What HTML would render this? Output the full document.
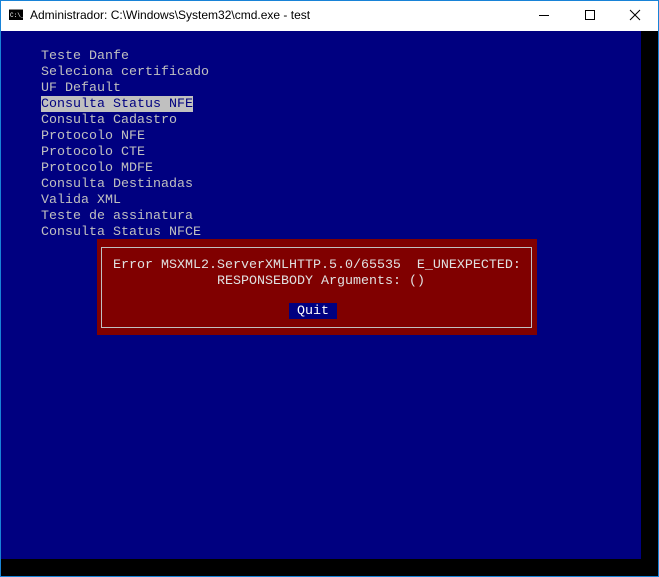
<!DOCTYPE html>
<html><head><style>
*{margin:0;padding:0}
body{width:659px;height:577px;background:#000;position:relative;overflow:hidden;font-family:"Liberation Mono",monospace}
#tb{position:absolute;left:0;top:0;width:659px;height:31px;background:#fff}
#tt{position:absolute;left:30px;top:8px;font:12px "Liberation Sans",sans-serif;color:#000}
#con{position:absolute;left:1px;top:31px;width:640px;height:528px;background:#000080}
.bl{position:absolute;background:#1883d7}
.ln{position:absolute;left:41px;font-size:13.33px;line-height:16px;height:16px;color:#c0c0c0;white-space:pre}
#dlg{position:absolute;left:97px;top:239px;width:440px;height:96px;background:#800000}
#in{position:absolute;left:4px;top:8px;width:429px;height:79px;border:1px solid #c0c0c0}
.dt{position:absolute;font-size:13.33px;line-height:16px;color:#e0e0e0;white-space:pre}
</style></head><body>
<div id="tb">
<svg style="position:absolute;left:9px;top:9px" width="14" height="11"><rect x="0" y="0" width="14" height="11" fill="#000"/><rect x="0" y="0" width="14" height="1" fill="#888"/><text x="1" y="8" font-size="6" fill="#fff" font-family="Liberation Mono">C:\_</text></svg>
<div id="tt">Administrador: C:\Windows\System32\cmd.exe - test</div>
<svg style="position:absolute;left:530px;top:8px" width="120" height="16"><line x1="9" y1="7.5" x2="19" y2="7.5" stroke="#000"/><rect x="55.5" y="2.5" width="9" height="9" fill="none" stroke="#000"/><path d="M100 2 L110 12 M110 2 L100 12" stroke="#000"/></svg>
</div>
<div class="bl" style="left:658px;top:0;width:1px;height:577px"></div>
<div class="bl" style="left:0;top:576px;width:659px;height:1px"></div>
<div class="bl" style="left:0;top:0;width:1px;height:577px"></div>
<div class="bl" style="left:0;top:0;width:659px;height:1px"></div>
<div id="con"></div>
<div class="ln" style="top:49px">Teste Danfe</div>
<div class="ln" style="top:65px">Seleciona certificado</div>
<div class="ln" style="top:81px">UF Default</div>
<div class="ln" style="top:96px;line-height:16px;padding-top:1px;height:15px;background:#c0c0c0;color:#000080;width:152px">Consulta Status NFE</div>
<div class="ln" style="top:113px">Consulta Cadastro</div>
<div class="ln" style="top:129px">Protocolo NFE</div>
<div class="ln" style="top:145px">Protocolo CTE</div>
<div class="ln" style="top:161px">Protocolo MDFE</div>
<div class="ln" style="top:177px">Consulta Destinadas</div>
<div class="ln" style="top:193px">Valida XML</div>
<div class="ln" style="top:209px">Teste de assinatura</div>
<div class="ln" style="top:225px">Consulta Status NFCE</div>
<div id="dlg"><div id="in"></div>
<div class="dt" style="left:16px;top:19px">Error MSXML2.ServerXMLHTTP.5.0/65535  E_UNEXPECTED:</div>
<div class="dt" style="left:120px;top:35px">RESPONSEBODY Arguments: ()</div>
<div class="dt" style="left:192px;top:64px;width:48px;height:16px;padding-top:1px;line-height:16px;box-sizing:border-box;background:#000080;color:#fff;text-align:center">Quit</div>
</div>
</body></html>
